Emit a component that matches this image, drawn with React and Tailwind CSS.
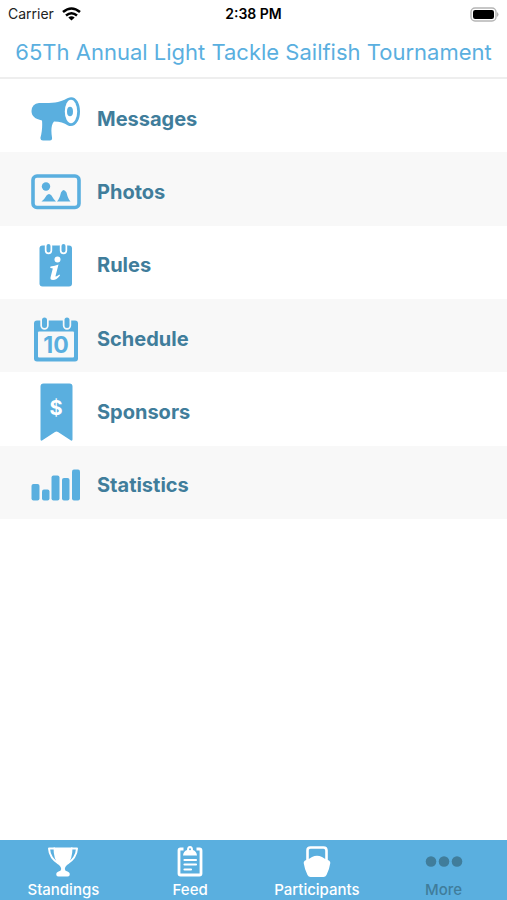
import React from "react";

const BLUE = "#5aafdf";

function Messages() {
  return (
    <svg width="50" height="44" viewBox="0 0 50 44" aria-hidden="true">
      <path
        fill={BLUE}
        d="M8 6H18C27 6 33 3 37 1C44 -2 49 5 49 14.500C49 24 44 31 37 28.500C33 26 29 24.500 23 24.500C20 28 20 34 21 40.500Q21.500 43.500 19 43.500H12Q9 43.500 9.500 40.500C11 35 11.500 29 11 23.500C4 22 0.500 19 0.500 14Q1 6.500 8 6Z"
      />
      <ellipse cx="40" cy="14.500" rx="6.200" ry="11.800" fill="#fff" />
      <ellipse cx="39" cy="14.500" rx="3" ry="4.800" fill={BLUE} />
    </svg>
  );
}

function Photos() {
  return (
    <svg width="50" height="36" viewBox="0 0 50 36" aria-hidden="true">
      <rect x="2" y="2" width="46" height="31.500" rx="4" fill="none" stroke={BLUE} strokeWidth="3.600" />
      <circle cx="15" cy="12.500" r="4.200" fill={BLUE} />
      <path
        fill={BLUE}
        d="M10.500 27.500Q14 24.500 15.500 21.500Q18 18.500 20.500 21.500Q22 24.500 25 27.500ZM26 27.500Q28.500 25 30 18.500Q32.500 13.500 35.500 18.500Q37 25 39.500 27.500Z"
      />
    </svg>
  );
}

function Rules() {
  return (
    <svg width="34" height="44" viewBox="0 0 34 44" aria-hidden="true">
      <rect x="0.500" y="2.500" width="32.500" height="41" rx="3" fill={BLUE} />
      <g stroke="#fff" strokeWidth="7.400" strokeLinecap="round">
        <path d="M9.500 3V7.500M24.500 3V7.500" />
      </g>
      <g stroke={BLUE} strokeWidth="4" strokeLinecap="round">
        <path d="M9.500 3V7.500M24.500 3V7.500" />
      </g>
      <circle cx="18.500" cy="16.500" r="3" fill="#fff" />
      <path
        fill="#fff"
        d="M11.500 23.500Q16 23 19.500 21.500L16.500 33Q16.300 34.500 20.500 31.500L21 32.500Q17.500 37 14 37Q11 37 11.500 34.500L13.800 25.500Q13.500 25 11.200 25Z"
      />
    </svg>
  );
}

function Schedule() {
  return (
    <svg width="46" height="46" viewBox="0 0 46 46" aria-hidden="true">
      <rect x="1" y="4.500" width="44" height="41" rx="3" fill={BLUE} />
      <rect x="5" y="15.500" width="36" height="26" rx="1" fill="#f8f8f8" />
      <g stroke="#f8f8f8" strokeWidth="8.400" strokeLinecap="round">
        <path d="M11.500 4V9.500M34 4V9.500" />
      </g>
      <g stroke={BLUE} strokeWidth="5" strokeLinecap="round">
        <path d="M11.500 4V9.500M34 4V9.500" />
      </g>
      <text
        x="23"
        y="37"
        textAnchor="middle"
        fill={BLUE}
        fontFamily="Inter, sans-serif"
        fontWeight="700"
        fontSize="23"
      >
        10
      </text>
    </svg>
  );
}

function Sponsors() {
  return (
    <svg width="33" height="58" viewBox="0 0 33 58" aria-hidden="true">
      <path
        fill={BLUE}
        d="M3.500 0.500H29.500Q32.500 0.500 32.500 3.500V56.500Q32.500 58 31 57.500L18 49Q16.500 48 15 49L2 57.500Q0.500 58 0.500 56.500V3.500Q0.500 0.500 3.500 0.500Z"
      />
      <text
        x="16"
        y="32"
        textAnchor="middle"
        fill="#fff"
        fontFamily="Inter, sans-serif"
        fontWeight="700"
        fontSize="20"
      >
        $
      </text>
    </svg>
  );
}

function Statistics() {
  return (
    <svg width="50" height="32" viewBox="0 0 50 32" fill={BLUE} aria-hidden="true">
      <rect x="0.500" y="15" width="8" height="16.500" rx="2" />
      <rect x="11" y="20.500" width="7.500" height="11" rx="2" />
      <rect x="20.500" y="6.500" width="8" height="25" rx="2" />
      <rect x="31" y="9" width="7.500" height="22.500" rx="2" />
      <rect x="41" y="0.500" width="8" height="31" rx="2" />
    </svg>
  );
}

function Trophy() {
  return (
    <svg width="32" height="32" viewBox="0 0 32 32" aria-hidden="true">
      <path
        fill="#fff"
        d="M6.500 1.500H25.500Q25.500 14 20 19Q17.800 21 17.800 23Q18 25 20.500 25.500Q23.500 26.500 22.500 29.500Q22 30.500 20.500 30.500H11.500Q10 30.500 9.500 29.500Q8.500 26.500 11.500 25.500Q14 25 14.200 23Q14.200 21 12 19Q6.500 14 6.500 1.500Z"
      />
      <path
        d="M8 2.500H2Q2.500 12 12 18M24 2.500H30Q29.500 12 20 18"
        fill="none"
        stroke="#fff"
        strokeWidth="2"
        strokeLinejoin="round"
      />
    </svg>
  );
}

function Clipboard() {
  return (
    <svg width="26" height="32" viewBox="0 0 26 32" aria-hidden="true">
      <path
        d="M6.500 3H3.500Q2 3 2 4.500V27.500Q2 29 3.500 29H22.500Q24 29 24 27.500V4.500Q24 3 22.500 3H19.500"
        fill="none"
        stroke="#fff"
        strokeWidth="2.800"
      />
      <path fill="#fff" d="M6 9.500Q6.500 5 10 4Q10 0 13 0Q16 0 16 4Q19.500 5 20 9.500Z" />
      <circle cx="13" cy="3.300" r="1" fill={BLUE} />
      <path d="M7.500 14H19M7.500 18.500H19M7.500 23.500H14" stroke="#fff" strokeWidth="2.200" strokeLinecap="round" />
    </svg>
  );
}

function Kettlebell() {
  return (
    <svg width="28" height="32" viewBox="0 0 28 32" aria-hidden="true">
      <path
        d="M4.500 14V4.500Q4.500 1.500 7.500 1.500H20.500Q23.500 1.500 23.500 4.500V14"
        fill="none"
        stroke="#fff"
        strokeWidth="2.600"
      />
      <path
        fill="#fff"
        d="M0.700 17Q0.500 15.500 2 14.500Q6 13 9 11Q14 8.500 19 11Q22 13 26 14.500Q27.500 15.500 27.300 17Q26.500 23 23.500 29Q22.500 31 20.500 31H7.500Q5.500 31 4.500 29Q1.500 23 0.700 17Z"
      />
    </svg>
  );
}

function Dots() {
  return (
    <svg width="38" height="32" viewBox="0 0 38 32" fill="#407d9b" aria-hidden="true">
      <circle cx="6" cy="15.500" r="5.300" />
      <circle cx="19" cy="15.500" r="5.300" />
      <circle cx="32" cy="15.500" r="5.300" />
    </svg>
  );
}

const menu = [
  { label: "Messages", Icon: Messages },
  { label: "Photos", Icon: Photos },
  { label: "Rules", Icon: Rules },
  { label: "Schedule", Icon: Schedule },
  { label: "Sponsors", Icon: Sponsors },
  { label: "Statistics", Icon: Statistics },
];

const tabs = [
  { label: "Standings", Icon: Trophy },
  { label: "Feed", Icon: Clipboard },
  { label: "Participants", Icon: Kettlebell },
  { label: "More", Icon: Dots, active: true },
];

function StatusBar() {
  return (
    <div className="grid h-7 grid-cols-3 items-center px-2 text-sm text-[#222]">
      <div className="flex items-center gap-2">
        <span>Carrier</span>
        <svg width="19" height="14" viewBox="0 0 19 14" fill="none" stroke="#000" strokeWidth="2.600" aria-label="Wi-Fi">
          <path d="M1 5Q9.500 -2 18 5M4 8.500Q9.500 4 15 8.500" />
          <path d="M9.500 13.500L6.300 10.500Q9.500 7.800 12.700 10.500Z" fill="#000" stroke="none" />
        </svg>
      </div>
      <span className="text-center font-semibold text-black">2:38 PM</span>
      <svg className="justify-self-end" width="29" height="15" viewBox="0 0 29 15" aria-label="Battery full">
        <rect x="1" y="1" width="25" height="13" rx="4" fill="#fff" stroke="#b5b5b5" strokeWidth="1.400" />
        <rect x="3" y="3" width="21" height="9" rx="2.200" fill="#000" />
        <path d="M27 5Q30 7.500 27 10Z" fill="#b5b5b5" />
      </svg>
    </div>
  );
}

export default function App() {
  return (
    <div className="flex min-h-screen flex-col bg-white font-['Inter',sans-serif]">
      <header className="border-b-2 border-[#eeeeee]">
        <StatusBar />
        <h1 className="flex h-[49px] items-center justify-center whitespace-nowrap text-[22px] text-[#5aafdf]">
          65Th Annual Light Tackle Sailfish Tournament
        </h1>
      </header>
      <main className="grow">
        <ul className="grid h-[440px] grid-rows-6">
          {menu.map(({ label, Icon }) => (
            <li key={label} className="even:bg-[#f8f8f8]">
              <button type="button" className="flex h-full w-full items-center gap-4 pl-[31px] pt-1.5 text-left">
                <span className="flex w-[50px] justify-center">
                  <Icon />
                </span>
                <span className="text-xl font-bold text-[#407d9b]">{label}</span>
              </button>
            </li>
          ))}
        </ul>
      </main>
      <nav className="grid h-[60px] grid-cols-4 bg-[#5aafdf]">
        {tabs.map(({ label, Icon, active }) => (
          <button
            key={label}
            type="button"
            aria-current={active ? "page" : undefined}
            className={
              "flex flex-col items-center pt-1.5 text-[15px] leading-6 font-medium " +
              (active ? "text-[#407d9b]" : "text-white")
            }
          >
            <Icon />
            <span>{label}</span>
          </button>
        ))}
      </nav>
    </div>
  );
}
